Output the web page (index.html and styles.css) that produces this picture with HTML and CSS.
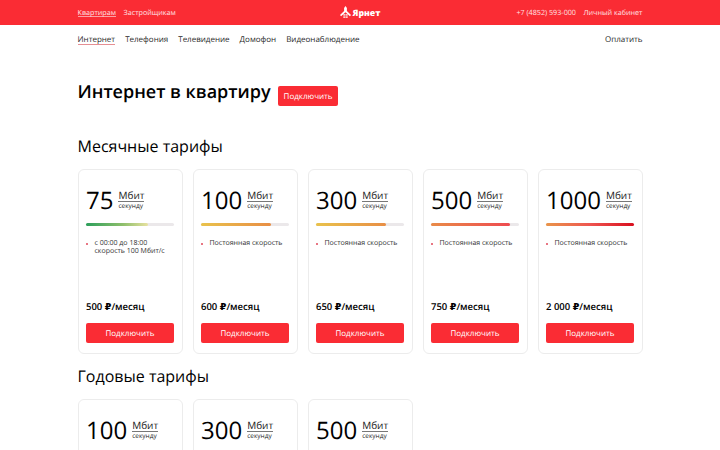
FILE: index.html
```html
<!DOCTYPE html>
<html lang="ru">

<head>
    <meta charset="UTF-8">
    <meta name="viewport" content="width=device-width, initial-scale=1.0">
    <title>Ярнет | Интернет в квартиру</title>
    <link rel="stylesheet" href="styles.css">
</head>

<body>

    <header class="topbar">
        <div class="container topbar-inner">
            <nav class="topbar-links">
                <a class="active" href="#">Квартирам</a>
                <a href="#">Застройщикам</a>
            </nav>
            <a class="logo" href="#">
                <svg class="logo-icon" width="11" height="13" viewBox="0 0 11 13">
                    <path fill="#fff" d="M5.500 0 6.900 2v3l4.100 4-1.100 1.300-4.400-4-4.400 4L0 9l4.100-4V2z"/>
                    <path fill="#fff" opacity=".75" d="M3.300 8.100h2v1.700h-2zM5.700 8.100h2v1.700h-2zM3.300 10.200h2v1.700h-2zM5.700 10.200h2v1.700h-2z"/>
                </svg>
                <span class="logo-text">Ярнет</span>
            </a>
            <div class="topbar-links">
                <a href="#">+7 (4852) 593-000</a>
                <a href="#">Личный кабинет</a>
            </div>
        </div>
    </header>

    <div class="container menu">
        <nav class="menu-links">
            <a class="active" href="#">Интернет</a>
            <a href="#">Телефония</a>
            <a href="#">Телевидение</a>
            <a href="#">Домофон</a>
            <a href="#">Видеонаблюдение</a>
        </nav>
        <a href="#">Оплатить</a>
    </div>

    <main class="container">
        <div class="title-row">
            <h1>Интернет в квартиру</h1>
            <button class="button">Подключить</button>
        </div>

        <h2>Месячные тарифы</h2>
        <section class="cards">
            <article class="card">
                <div class="speed">
                    <span class="number">75</span>
                    <span class="unit"><span class="mbit">Мбит</span><span class="second">секунду</span></span>
                </div>
                <div class="bar"><div class="fill green" style="width: 70%"></div></div>
                <ul>
                    <li>с 00:00 до 18:00 скорость 100 Мбит/с</li>
                </ul>
                <p class="price">500 <span class="rub">₽</span>/месяц</p>
                <button class="button">Подключить</button>
            </article>
            <article class="card">
                <div class="speed">
                    <span class="number">100</span>
                    <span class="unit"><span class="mbit">Мбит</span><span class="second">секунду</span></span>
                </div>
                <div class="bar"><div class="fill yellow" style="width: 80%"></div></div>
                <ul>
                    <li>Постоянная скорость</li>
                </ul>
                <p class="price">600 <span class="rub">₽</span>/месяц</p>
                <button class="button">Подключить</button>
            </article>
            <article class="card">
                <div class="speed">
                    <span class="number">300</span>
                    <span class="unit"><span class="mbit">Мбит</span><span class="second">секунду</span></span>
                </div>
                <div class="bar"><div class="fill yellow" style="width: 80%"></div></div>
                <ul>
                    <li>Постоянная скорость</li>
                </ul>
                <p class="price">650 <span class="rub">₽</span>/месяц</p>
                <button class="button">Подключить</button>
            </article>
            <article class="card">
                <div class="speed">
                    <span class="number">500</span>
                    <span class="unit"><span class="mbit">Мбит</span><span class="second">секунду</span></span>
                </div>
                <div class="bar"><div class="fill orange" style="width: 90%"></div></div>
                <ul>
                    <li>Постоянная скорость</li>
                </ul>
                <p class="price">750 <span class="rub">₽</span>/месяц</p>
                <button class="button">Подключить</button>
            </article>
            <article class="card">
                <div class="speed">
                    <span class="number">1000</span>
                    <span class="unit"><span class="mbit">Мбит</span><span class="second">секунду</span></span>
                </div>
                <div class="bar"><div class="fill red" style="width: 100%"></div></div>
                <ul>
                    <li>Постоянная скорость</li>
                </ul>
                <p class="price">2 000 <span class="rub">₽</span>/месяц</p>
                <button class="button">Подключить</button>
            </article>
        </section>

        <h2>Годовые тарифы</h2>
        <section class="cards cards-year">
            <article class="card">
                <div class="speed">
                    <span class="number">100</span>
                    <span class="unit"><span class="mbit">Мбит</span><span class="second">секунду</span></span>
                </div>
            </article>
            <article class="card">
                <div class="speed">
                    <span class="number">300</span>
                    <span class="unit"><span class="mbit">Мбит</span><span class="second">секунду</span></span>
                </div>
            </article>
            <article class="card">
                <div class="speed">
                    <span class="number">500</span>
                    <span class="unit"><span class="mbit">Мбит</span><span class="second">секунду</span></span>
                </div>
            </article>
        </section>
    </main>

</body>

</html>
```
FILE: styles.css
```css
*,
*::before,
*::after {
    box-sizing: border-box;
    margin: 0;
    padding: 0;
}

body {
    background: #fff;
    color: #000;
    font-family: 'Open Sans', sans-serif;
    font-size: 8px;
    height: 450px;
    overflow: hidden;
    text-rendering: geometricPrecision;
}

a {
    color: inherit;
    text-decoration: none;
}

.container {
    margin: 0 auto;
    width: 565px;
}

.topbar {
    background: #fa2c34;
    color: #ffe3e4;
    font-size: 7.2px;
    height: 25px;
}

.topbar-inner {
    align-items: center;
    display: grid;
    grid-template-columns: 1fr auto 1fr;
    height: 25px;
}

.topbar-links {
    display: flex;
    gap: 7.5px;
    line-height: 10px;
    padding-top: 1px;
}

.topbar-links:last-child {
    justify-content: flex-end;
}

.topbar-links .active {
    border-bottom: 1px solid #fda0a4;
    height: 9px;
}

.logo {
    align-items: center;
    color: #fff;
    display: flex;
    gap: 2px;
}

.logo-text {
    font-size: 8.7px;
    font-weight: 800;
    line-height: 12px;
    padding-top: 1px;
}

.menu {
    color: #2a2a2a;
    display: flex;
    font-size: 8px;
    justify-content: space-between;
    line-height: 12px;
    padding-top: 9px;
}

.menu-links {
    display: flex;
    gap: 10px;
}

.menu .active {
    border-bottom: 1px solid #e58f94;
    height: 11px;
}

.title-row {
    align-items: center;
    display: flex;
    gap: 7.5px;
    height: 28px;
    margin-top: 31px;
}

h1 {
    font-size: 18px;
    font-weight: 600;
    line-height: 24px;
    padding-top: 1px;
}

h2 {
    font-size: 16px;
    font-weight: 400;
    line-height: 22px;
    margin-bottom: 12px;
}

.button {
    background: #fa2c34;
    border: none;
    border-radius: 2px;
    color: #fff;
    font-family: inherit;
    font-size: 8px;
    height: 20.5px;
    line-height: 11px;
    padding-top: 1px;
    text-rendering: inherit;
}

.title-row .button {
    margin-top: 10px;
    width: 60px;
}

.title-row + h2 {
    margin-top: 30px;
}

.cards {
    display: grid;
    gap: 10px;
    grid-template-columns: repeat(5, 105px);
    margin-bottom: 11px;
}

.cards-year {
    height: 51px;
    margin-bottom: 0;
    overflow: hidden;
}

.card {
    border: 1px solid #ececec;
    border-radius: 6px;
    display: flex;
    flex-direction: column;
    height: 185px;
    padding: 14px 7.5px 10px;
}

.speed {
    display: flex;
    gap: 5px;
    height: 32px;
}

.number {
    font-size: 24px;
    line-height: 33px;
}

.unit {
    align-self: flex-start;
    color: #222;
    display: flex;
    flex-direction: column;
    padding-top: 5px;
}

.mbit {
    border-bottom: 1px solid #777;
    font-size: 10px;
    line-height: 12px;
}

.second {
    font-size: 6.5px;
    line-height: 7px;
}

.bar {
    background: #ebe8ea;
    border-radius: 2px;
    height: 3px;
    margin-top: 7px;
}

.fill {
    border-radius: 2px;
    height: 3px;
}

.green {
    background: linear-gradient(90deg, #2c9f5b, #8fbf6c 60%, #e8e2a0);
}

.yellow {
    background: linear-gradient(90deg, #e9c24c, #e88e45);
}

.orange {
    background: linear-gradient(90deg, #e98b48, #ee4a50);
}

.red {
    background: linear-gradient(90deg, #e9954a, #ee5550 50%, #d90f1e);
}

ul {
    color: #333;
    font-size: 7px;
    line-height: 8px;
    list-style: none;
    margin-top: 14px;
}

li {
    padding-left: 8.5px;
    position: relative;
}

li::before {
    background: #e0485a;
    border-radius: 50%;
    content: '';
    height: 2px;
    left: 0;
    position: absolute;
    top: 3px;
    width: 2px;
}

.price {
    font-size: 9.5px;
    font-weight: 600;
    line-height: 12px;
    margin-bottom: 9px;
    margin-top: auto;
}

.rub {
    font-family: 'DejaVu Sans', sans-serif;
    font-weight: 700;
}
```
